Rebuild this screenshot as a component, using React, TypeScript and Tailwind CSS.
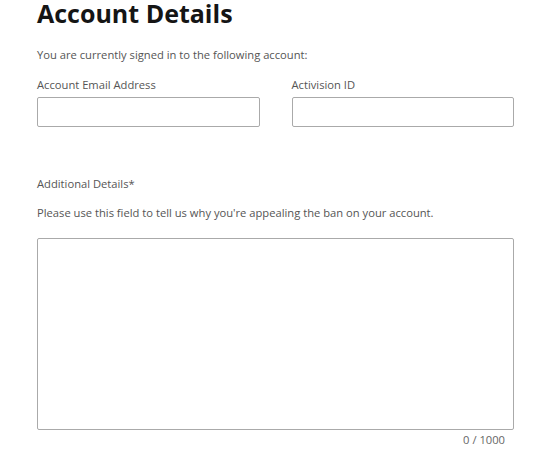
import React from "react";

export default function App() {
  const font = { fontFamily: '"Open Sans", "Noto Sans", sans-serif' };
  return (
    <div className="w-[550px] h-[457px] bg-white overflow-hidden" style={font}>
      <div className="pl-[37px] w-[514px] flex flex-col">
        <h1 className="text-[25px] leading-[27px] font-bold text-[#151515] whitespace-nowrap">
          Account Details
        </h1>
        <p className="mt-[20px] text-[11.2px] leading-[16px] text-[#555]">
          You are currently signed in to the following account:
        </p>
        <div className="mt-[14px] grid grid-cols-2 gap-x-[32px]">
          <div className="flex flex-col">
            <label className="text-[11.2px] leading-[16px] text-[#555]">Account Email Address</label>
            <input className="mt-[4px] h-[30px] border border-[#aaa] rounded-[2px] bg-white outline-none" />
          </div>
          <div className="flex flex-col">
            <label className="text-[11.2px] leading-[16px] text-[#555]">Activision ID</label>
            <input className="mt-[4px] h-[30px] border border-[#aaa] rounded-[2px] bg-white outline-none" />
          </div>
        </div>
        <p className="mt-[49px] text-[11.2px] leading-[16px] text-[#555]">Additional Details*</p>
        <p className="mt-[13px] text-[11.2px] leading-[16px] text-[#555]">
          Please use this field to tell us why you're appealing the ban on your account.
        </p>
        <textarea className="mt-[17px] h-[192px] border border-[#aaa] rounded-[2px] bg-white outline-none resize-none" />
        <p className="mt-[2px] pr-[9px] text-right text-[11.2px] leading-[16px] text-[#666]">0 / 1000</p>
      </div>
    </div>
  );
}
